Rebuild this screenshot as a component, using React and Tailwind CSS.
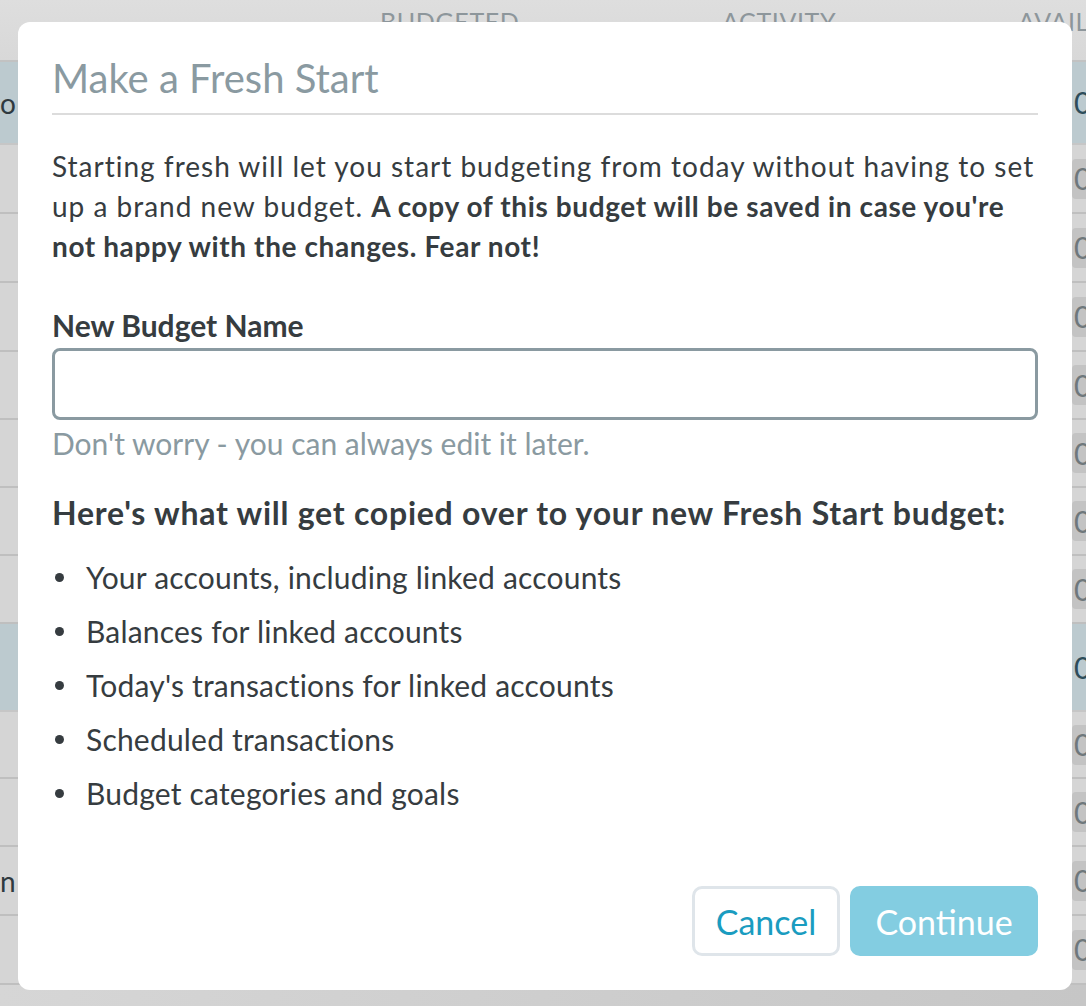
import React from "react";

const rows = [
  { type: "group", h: 83, left: "o" },
  { type: "row", h: 69 },
  { type: "row", h: 69 },
  { type: "row", h: 69 },
  { type: "row", h: 68 },
  { type: "row", h: 68 },
  { type: "row", h: 68 },
  { type: "row", h: 68 },
  { type: "group", h: 88 },
  { type: "row", h: 67 },
  { type: "row", h: 68 },
  { type: "row", h: 69, left: "n" },
  { type: "row", h: 69 },
];

function Background() {
  return (
    <div className="flex flex-col w-full h-[1006px] overflow-hidden bg-gradient-to-r from-[#d6d6d6] to-[#c6c6c6]">
      <div className="h-[62px] shrink-0 flex items-start bg-gradient-to-b from-[#dedede] to-[#d8d8d8] border-b-2 border-[#c2c2c2] text-[#8d969b] text-[25px] tracking-wide pt-[3px]">
        <div className="w-[380px] shrink-0" />
        <div className="w-[342px] shrink-0">BUDGETED</div>
        <div className="w-[296px] shrink-0">ACTIVITY</div>
        <div className="shrink-0">AVAILABLE</div>
      </div>
      {rows.map((r, i) => (
        <div
          key={i}
          className={
            r.type === "group"
              ? "shrink-0 flex items-center bg-[#bccacf] border-b-2 border-[#c6c6c6] text-[#2e4d5a]"
              : "shrink-0 flex items-center bg-[#d5d5d5] border-b-2 border-[#bfbfbf] text-[#6f787c]"
          }
          style={{ height: r.h }}
        >
          <div className="w-[1072px] shrink-0 text-[28px] text-[#2f3a40]">
            {r.left || ""}
          </div>
          <div
            className={
              r.type === "group"
                ? "flex-1 h-[40px] flex items-center text-[30px] pl-[2px]"
                : "flex-1 h-[40px] flex items-center text-[30px] pl-[2px] bg-[#c3c3c3] rounded-l-[4px]"
            }
          >
            0.00
          </div>
        </div>
      ))}
    </div>
  );
}

const items = [
  "Your accounts, including linked accounts",
  "Balances for linked accounts",
  "Today's transactions for linked accounts",
  "Scheduled transactions",
  "Budget categories and goals",
];

export default function App() {
  return (
    <div className="relative w-[1086px] h-[1006px] overflow-hidden font-['Lato','Noto_Sans',sans-serif]">
      <Background />
      <div className="absolute left-[18px] top-[22px] w-[1054px] h-[968px] bg-white rounded-[12px] px-[34px] pt-[33px] pb-[34px] flex flex-col text-[#363c40]">
        <h1 className="text-[40px] leading-[46px] text-[#8a9aa1] pb-[12px] border-b-2 border-[#dcdcdc]">
          Make a Fresh Start
        </h1>
        <p className="mt-[31px] text-[28px] leading-[40px] tracking-[1px]">
          Starting fresh will let you start budgeting from today without having to set up a brand new budget.{" "}
          <strong className="font-bold tracking-[0.6px]">
            A copy of this budget will be saved in case you're not happy with the changes. Fear not!
          </strong>
        </p>
        <label className="mt-[39px] text-[30px] leading-[40px] font-bold">New Budget Name</label>
        <input
          type="text"
          className="mt-[3px] h-[72px] w-full border-[3px] border-[#8a9aa1] rounded-[8px] px-4 text-[28px] outline-none"
        />
        <div className="text-[30px] leading-[40px] text-[#8a9aa1] mt-[3px]">
          Don't worry - you can always edit it later.
        </div>
        <h2 className="mt-[30px] text-[32px] leading-[40px] font-bold tracking-[0.75px]">
          Here's what will get copied over to your new Fresh Start budget:
        </h2>
        <ul className="mt-[17px] flex flex-col">
          {items.map((t) => (
            <li key={t} className="flex items-center h-[54px] text-[30px] tracking-[0.2px]">
              <span className="w-[34px] shrink-0 flex justify-start pl-[3px]">
                <span className="w-[9px] h-[9px] rounded-full bg-[#363c40]" />
              </span>
              <span>{t}</span>
            </li>
          ))}
        </ul>
        <div className="mt-auto flex justify-end gap-[10px]">
          <button className="w-[148px] h-[70px] rounded-[10px] border-[3px] border-[#dfe5ea] bg-white text-[#1a9cc0] text-[34px]">
            Cancel
          </button>
          <button className="w-[188px] h-[70px] rounded-[10px] bg-[#83cde1] text-white text-[34px]">
            Continue
          </button>
        </div>
      </div>
    </div>
  );
}
